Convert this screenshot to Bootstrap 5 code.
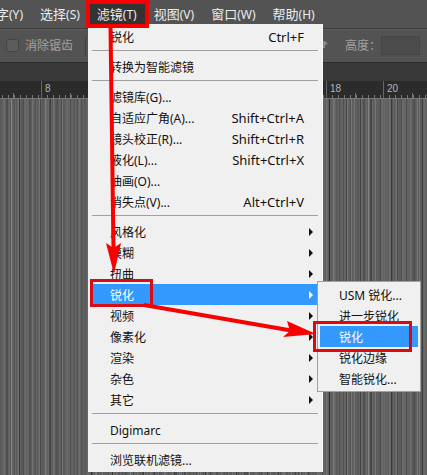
<!DOCTYPE html>
<html lang="zh-CN">
<head>
<meta charset="utf-8">
<meta name="viewport" content="width=device-width, initial-scale=1">
<title>滤镜菜单</title>
<link rel="stylesheet" href="https://cdn.jsdelivr.net/npm/bootstrap@5.3.0/dist/css/bootstrap.min.css">
<style>
body{font-family:"Noto Sans","Noto Sans CJK SC",sans-serif;font-size:12px;line-height:21px;background:#535353}
button{font-family:inherit;line-height:inherit}
.menu-bar{height:28px;background:#535353;margin-left:-4px;gap:1px}
.menu-bar button{font-size:13px;color:#ececec;background:none;border:0;padding:0 8px;height:28px;line-height:27px;white-space:nowrap}
.menu-bar .latin{font-size:12px}
.menu-bar .opened{background:#333}
.options{height:35px;background:#535353;border-top:1px solid #3a3a3a;border-bottom:1px solid #2b2b2b;color:#a2a2a2;padding:0 7px 0 6px;box-shadow:inset 0 1px #5e5e5e}
.options .form-check-input{width:13px;height:13px;margin:0;background-color:#5c5c5c;border:1px solid #444;border-radius:3px;opacity:1}
.options .aa{border-right:1px solid #404040;height:20px;line-height:20px;width:80px;gap:6px}
.options .aa label{opacity:1!important;color:#a2a2a2}
.options .size-box{width:39px;height:19px;background:#4c4c4c;border:1px solid #454545;border-radius:0;padding:0}
.tab-strip{height:18px;background:#393939}
.ruler{height:18px;background:#2b2b2b;border-bottom:1px solid #777;margin-left:-16px}
.ruler .unit{flex:0 0 57px;height:17px;font-size:10px;line-height:16px;color:#b5b5b5;padding-left:3px;border-left:1px solid #666;font-family:"Liberation Sans",sans-serif;
background:repeating-linear-gradient(90deg,transparent 0 5px,#777 5px 6px) 0 100%/100% 3px no-repeat,linear-gradient(#777,#777) 28px 100%/1px 5px no-repeat}
.canvas{background:
repeating-linear-gradient(90deg,transparent 0 6px,#00000038 6px 7px,transparent 7px 11px,#ffffff20 11px 12px,transparent 12px 17px),
repeating-linear-gradient(90deg,#00000024 0 1px,transparent 1px 4px,#ffffff18 4px 5px,transparent 5px 7px),
repeating-linear-gradient(90deg,transparent 0 19px,#00000060 19px 20px,transparent 20px 29px,#00000030 29px 31px),
repeating-linear-gradient(90deg,#666 0 1px,#5c5c5c 1px 2px,#626262 2px 3px)}
.popup{background:#f0f0f0;position:absolute}
.main-popup{left:88px;top:24px;width:235px;padding:2px 1px 2px 3px;border-right:1px solid #fafafa}
.sub-popup{left:317px;top:281px;width:104px;padding:2px;border:1px solid #a0a0a0}
.entry{display:flex;align-items:center;width:100%;height:21px;border:0;background:none;color:#111;padding:1px 8px 0 19px;text-align:left;white-space:nowrap}
.main-popup .entry{padding-right:17px}
.main-popup .has-sub{padding-right:8px}
.entry .keys{font-size:13px}
.entry.chosen{background:#3399ff;color:#fff}
.has-sub::after{content:"";margin-left:auto;border-left:4px solid currentColor;border-top:4px solid transparent;border-bottom:4px solid transparent}
.rule{height:1px;margin:3px 3px 5px 1px;background:#a0a0a0;border:0;opacity:1}
.marks{position:absolute;left:0;top:0;pointer-events:none}
</style>
<script src="https://cdn.jsdelivr.net/npm/bootstrap@5.3.0/dist/js/bootstrap.bundle.min.js"></script>
</head>
<body>
<div class="position-relative d-flex flex-column min-vh-100 overflow-hidden">
<nav class="menu-bar d-flex" aria-label="菜单栏">
<button type="button" class="ps-0">字<span class="latin">(Y)</span></button><button type="button">选择<span class="latin">(S)</span></button><button type="button" class="opened">滤镜<span class="latin">(T)</span></button><button type="button">视图<span class="latin">(V)</span></button><button type="button">窗口<span class="latin">(W)</span></button><button type="button">帮助<span class="latin">(H)</span></button>
</nav>
<div class="options d-flex align-items-center justify-content-between">
<div class="aa d-flex align-items-center"><input class="form-check-input" type="checkbox" id="aa" disabled><label for="aa" class="text-nowrap">消除锯齿</label></div>
<div class="d-flex align-items-center"><svg class="me-3" width="7" height="12" viewBox="0 0 7 12" aria-hidden="true"><path d="M0 1h3l3 3-3 1v3H0" fill="#858585"/></svg><label for="hh">高度：</label><input id="hh" class="size-box form-control" type="text" disabled></div>
</div>
<div class="tab-strip"></div>
<div class="ruler d-flex overflow-hidden"><span class="unit"></span><span class="unit">8</span><span class="unit"></span><span class="unit"></span><span class="unit"></span><span class="unit"></span><span class="unit">18</span><span class="unit">20</span></div>
<main class="canvas flex-grow-1"></main>

<div class="popup main-popup">
<button type="button" class="entry">锐化<span class="keys ms-auto">Ctrl+F</span></button>
<hr class="rule">
<button type="button" class="entry">转换为智能滤镜</button>
<hr class="rule">
<button type="button" class="entry">滤镜库(G)...</button>
<button type="button" class="entry">自适应广角(A)...<span class="keys ms-auto">Shift+Ctrl+A</span></button>
<button type="button" class="entry">镜头校正(R)...<span class="keys ms-auto">Shift+Ctrl+R</span></button>
<button type="button" class="entry">液化(L)...<span class="keys ms-auto">Shift+Ctrl+X</span></button>
<button type="button" class="entry">油画(O)...</button>
<button type="button" class="entry">消失点(V)...<span class="keys ms-auto">Alt+Ctrl+V</span></button>
<hr class="rule">
<button type="button" class="entry has-sub">风格化</button>
<button type="button" class="entry has-sub">模糊</button>
<button type="button" class="entry has-sub">扭曲</button>
<button type="button" class="entry has-sub chosen">锐化</button>
<button type="button" class="entry has-sub">视频</button>
<button type="button" class="entry has-sub">像素化</button>
<button type="button" class="entry has-sub">渲染</button>
<button type="button" class="entry has-sub">杂色</button>
<button type="button" class="entry has-sub">其它</button>
<hr class="rule">
<button type="button" class="entry">Digimarc</button>
<hr class="rule">
<button type="button" class="entry">浏览联机滤镜...</button>
</div>

<div class="popup sub-popup">
<button type="button" class="entry">USM 锐化...</button>
<button type="button" class="entry">进一步锐化</button>
<button type="button" class="entry chosen">锐化</button>
<button type="button" class="entry">锐化边缘</button>
<button type="button" class="entry">智能锐化...</button>
</div>

<svg class="marks" width="427" height="475" viewBox="0 0 427 475" aria-hidden="true">
<g fill="none" stroke="#f80000">
<rect x="88" y="2" width="59" height="24" stroke-width="4"/>
<rect x="91.500" y="280.500" width="60" height="25" stroke="#d80c14" stroke-width="3"/>
<rect x="314.500" y="322.500" width="96" height="28" stroke="#e00810" stroke-width="3"/>
<path d="M110.500 26L113.500 250" stroke-width="4"/>
<path d="M144 305L294 331" stroke-width="4"/>
</g>
<path fill="#f80000" d="M106 243l7.500 5 7.500-5-7 31zM287 321l29 13-33 3 7-6z"/>
</svg>
</div>
</body>
</html>
